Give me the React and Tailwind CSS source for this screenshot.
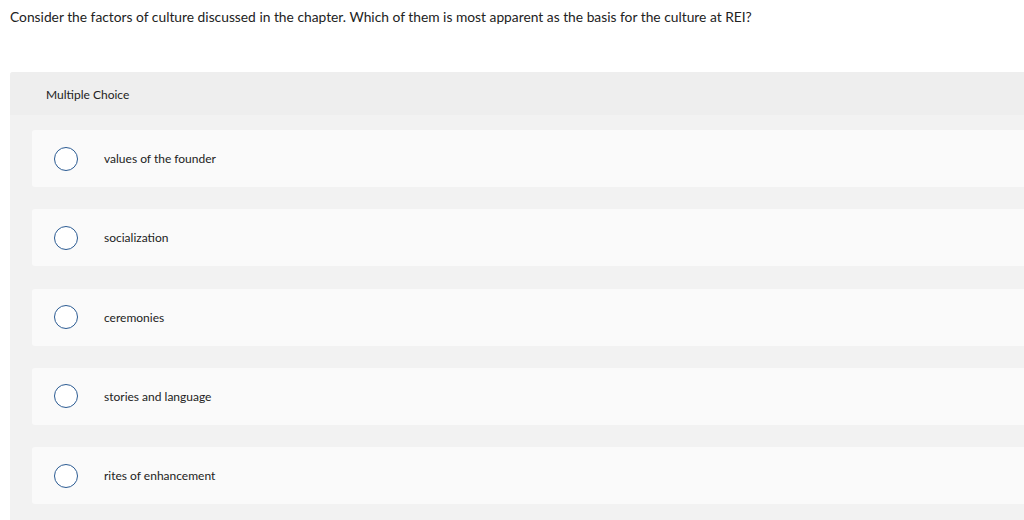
export default function App() {
  const options = [
    "values of the founder",
    "socialization",
    "ceremonies",
    "stories and language",
    "rites of enhancement",
  ];
  return (
    <div className="w-[1024px] h-[520px] overflow-hidden bg-white text-[#222]" style={{ fontFamily: "Lato, 'Liberation Sans', sans-serif" }}>
      <div className="pl-[10px] pt-[8px] h-[72px] text-[13.8px] leading-[17px]">
        Consider the factors of culture discussed in the chapter. Which of them is most apparent as the basis for the culture at REI?
      </div>
      <div className="ml-[10px] bg-[#f2f2f2] rounded-tl-[3px] pb-[20px]">
        <div className="h-[43px] bg-[#eeeeee] flex items-center pl-[36px] pt-[2px] text-[12px] rounded-tl-[3px]">
          Multiple Choice
        </div>
        <div className="flex flex-col gap-[22.3px] pt-[15px] pl-[22px]">
          {options.map((o) => (
            <div key={o} className="h-[57px] bg-[#fafafa] rounded-l-[3px] flex items-center pl-[22px]">
              <div className="w-[24px] h-[24px] rounded-full border border-[#2a5a92] bg-white shrink-0" />
              <span className="ml-[26px] text-[12px] pt-[1px]">{o}</span>
            </div>
          ))}
        </div>
      </div>
    </div>
  );
}
